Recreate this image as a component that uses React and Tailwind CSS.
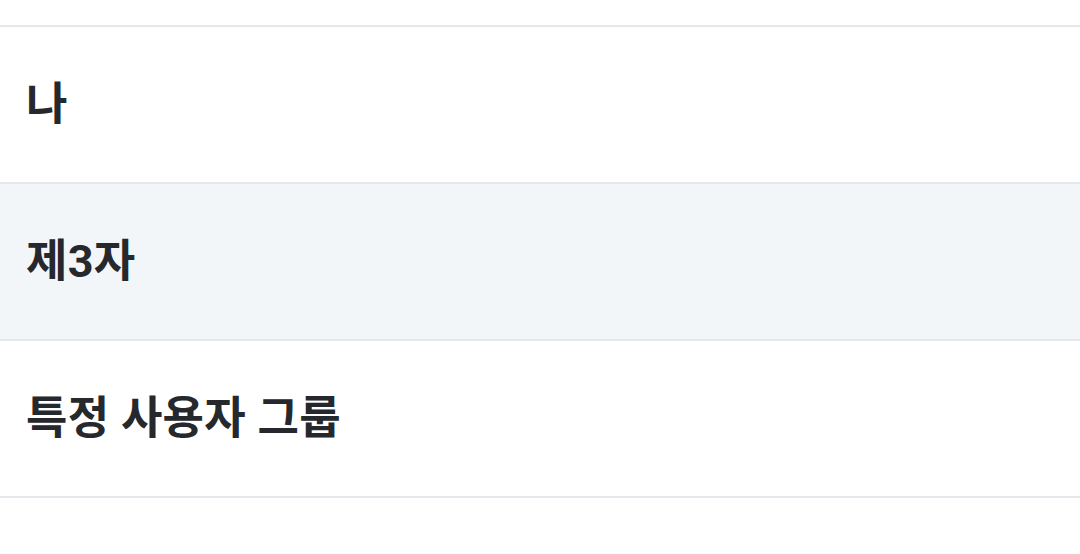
import React from 'react';

const rows = [
    { label: '나', active: false },
    { label: '제3자', active: true },
    { label: '특정 사용자 그룹', active: false },
];

const App = () => {
    return (
        <div className="min-h-screen bg-white" style={{ fontFamily: 'Roboto, "Noto Sans CJK KR", "Noto Sans", sans-serif' }}>
            <div className="h-[25px]" />
            <ul className="border-t-2 border-[#e4e8ec]">
                {rows.map((row) => (
                    <li key={row.label}
                        className={`h-[157px] flex items-center px-[26px] border-b-2 border-[#e4e8ec] ${
                            row.active ? 'bg-[#f3f6f9]' : 'bg-white'
                        }`}>
                        <span className="text-[45px] font-bold text-[#25282c] leading-none tracking-[0.3px]">{row.label}</span>
                    </li>
                ))}
            </ul>
        </div>
    );
};

export default App;
